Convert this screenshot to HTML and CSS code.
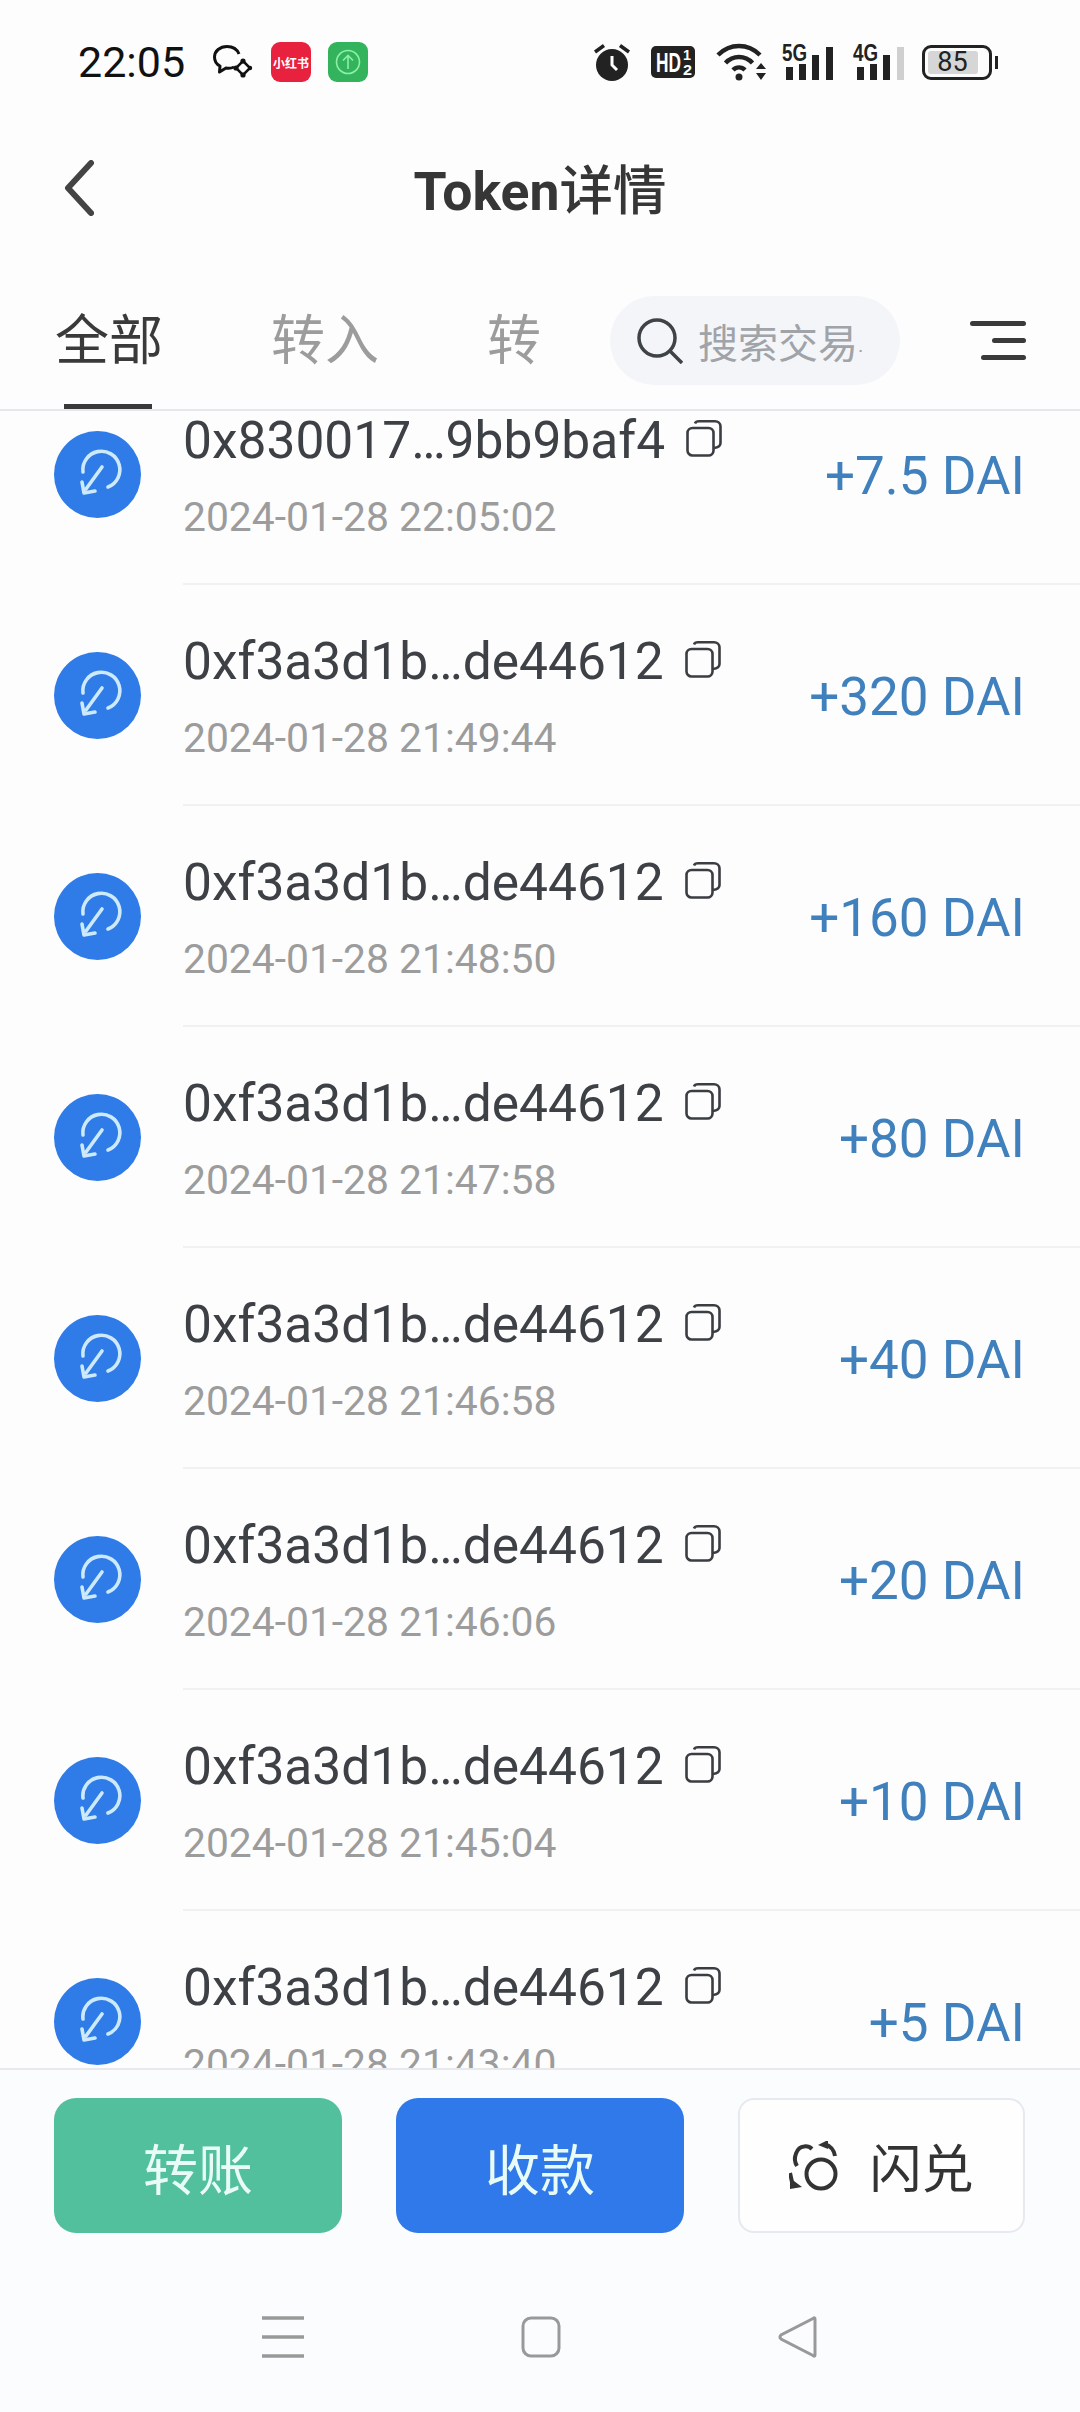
FILE: index.html
```html
<!DOCTYPE html>
<html lang="zh-CN">
<head>
  <meta charset="UTF-8">
  <meta name="viewport" content="width=device-width, initial-scale=1.0">
  <title>Token详情</title>
  <link rel="stylesheet" href="styles.css">
</head>
<body>
  <svg class="sprite" width="0" height="0">
    <symbol id="tx-in" viewBox="14 11 87 87">
      <circle cx="57.5" cy="54.5" r="43.5" fill="#2f7be8"/>
      <g fill="none" stroke="#cdeafc" stroke-width="3.6" stroke-linecap="round" stroke-linejoin="round">
        <path d="M43 52A18.500 18.500 0 1 1 68 67"/>
        <path d="M62 47L46 69"/>
        <path d="M42 62L44 73L55 71"/>
      </g>
    </symbol>
    <symbol id="copy" viewBox="0 0 36 37">
      <g fill="none" stroke="#3a3d42" stroke-width="2.600">
        <rect x="1.500" y="8" width="26" height="27.500" rx="5"/>
        <path d="M9 3.500C9.500 2 11 1.300 13 1.300H29C32 1.300 34.500 3.500 34.500 6.500V23C34.500 26 33 27.500 28 28"/>
      </g>
    </symbol>
  </svg>

  <div class="page">
    <div class="status-bar">
      <div class="status-left">
        <span class="clock">22:05</span>
        <svg class="ic-chat" width="40" height="34" viewBox="0 0 40 34">
          <path d="M26 9C24 4 19 1.500 14 1.500C7 1.500 1.500 6 1.500 12C1.500 16 4 19.500 7 21L6.500 27L13 23C15 23.500 18 23.500 21 22" fill="none" stroke="#111" stroke-width="3" stroke-linejoin="round"/>
          <path d="M30 16L37 23L30 30L23 23Z" fill="none" stroke="#111" stroke-width="2.500"/>
          <circle cx="30" cy="16" r="2.600" fill="#111"/>
          <circle cx="23" cy="23" r="2.600" fill="#111"/>
          <circle cx="30" cy="30" r="2.600" fill="#111"/>
          <circle cx="37" cy="23" r="2.200" fill="#111"/>
        </svg>
        <span class="app-badge app-red">小红书</span>
        <span class="app-badge app-green">
          <svg width="26" height="26" viewBox="0 0 26 26">
            <g fill="none" stroke="#8df0a8" stroke-width="1.600">
              <circle cx="13" cy="13" r="11.500"/>
              <path d="M13 20V6.500M8 11.500L13 6.500L18 11.500"/>
            </g>
          </svg>
        </span>
      </div>
      <div class="status-right">
        <svg class="ic-alarm" width="38" height="38" viewBox="0 0 38 38">
          <circle cx="19" cy="22" r="16" fill="#222"/>
          <path d="M19 13V22L24 27" fill="none" stroke="#fff" stroke-width="3"/>
          <path d="M2 9L11 2.500M36 9L27 2.500" stroke="#222" stroke-width="3.500"/>
        </svg>
        <svg class="ic-hd" width="44" height="32" viewBox="0 0 44 32">
          <rect width="44" height="32" rx="5" fill="#222"/>
          <text x="5" y="26" class="hd-text" textLength="25" lengthAdjust="spacingAndGlyphs">HD</text>
          <text x="32" y="14" class="hd-frac" textLength="8" lengthAdjust="spacingAndGlyphs">1</text>
          <text x="32" y="29" class="hd-frac" textLength="9" lengthAdjust="spacingAndGlyphs">2</text>
        </svg>
        <svg class="ic-wifi" width="51" height="38" viewBox="0 0 51 38">
          <g fill="none" stroke="#222" stroke-width="4.500">
            <path d="M2 12C14 0 32 0 44 12"/>
            <path d="M9.500 20C17 12 29 12 36.500 20"/>
            <path d="M17 27C20.500 23.500 25.500 23.500 29 27"/>
          </g>
          <circle cx="23" cy="34" r="3.500" fill="#222"/>
          <path d="M40 26L45 20L50 26ZM40 30L45 37L50 30Z" fill="#222"/>
        </svg>
        <svg class="ic-signal" width="52" height="37" viewBox="0 0 52 37">
          <text x="0" y="17" class="net-text" textLength="25" lengthAdjust="spacingAndGlyphs">5G</text>
          <rect x="4" y="23" width="7" height="13" fill="#222"/>
          <rect x="17" y="20" width="7" height="16" fill="#222"/>
          <rect x="30" y="11" width="7" height="25" fill="#222"/>
          <rect x="44" y="3" width="7" height="33" fill="#222"/>
        </svg>
        <svg class="ic-signal" width="52" height="37" viewBox="0 0 52 37">
          <text x="0" y="17" class="net-text" textLength="25" lengthAdjust="spacingAndGlyphs">4G</text>
          <rect x="4" y="23" width="7" height="13" fill="#222"/>
          <rect x="17" y="20" width="7" height="16" fill="#222"/>
          <rect x="30" y="11" width="7" height="25" fill="#222"/>
          <rect x="44" y="3" width="7" height="33" fill="#cfcfcf"/>
        </svg>
        <div class="battery">
          <span class="battery-level"></span>
          <span class="battery-num">85</span>
          <span class="battery-nub"></span>
        </div>
      </div>
    </div>

    <div class="title-bar">
      <svg class="back" width="30" height="56" viewBox="0 0 30 56">
        <path d="M27 3L4 28L27 53" fill="none" stroke="#444" stroke-width="6" stroke-linecap="round" stroke-linejoin="round"/>
      </svg>
      <h1 class="title">Token<span class="title-cjk">详情</span></h1>
    </div>

    <div class="tabs">
      <span class="tab active">全部</span>
      <span class="tab">转入</span>
      <span class="tab">转</span>
      <div class="search">
        <svg width="46" height="46" viewBox="0 0 46 46">
          <circle cx="20" cy="20" r="18" fill="none" stroke="#3f4246" stroke-width="3.500"/>
          <path d="M33 33L45 45" stroke="#3f4246" stroke-width="3.500"/>
        </svg>
        <span class="search-text">搜索交易<i class="search-dot">·</i></span>
      </div>
      <div class="filter">
        <span class="filter-line l1"></span>
        <span class="filter-line l2"></span>
        <span class="filter-line l3"></span>
      </div>
    </div>

    <div class="list">
      <div class="rows">
        <div class="row">
          <svg class="avatar"><use href="#tx-in"/></svg>
          <div class="row-body">
            <div class="row-info">
              <div class="addr">0x830017…9bb9baf4<svg class="copy"><use href="#copy"/></svg></div>
              <div class="time">2024-01-28 22:05:02</div>
            </div>
            <div class="amount">+7.5 DAI</div>
          </div>
        </div>
        <div class="row">
          <svg class="avatar"><use href="#tx-in"/></svg>
          <div class="row-body">
            <div class="row-info">
              <div class="addr">0xf3a3d1b…de44612<svg class="copy"><use href="#copy"/></svg></div>
              <div class="time">2024-01-28 21:49:44</div>
            </div>
            <div class="amount">+320 DAI</div>
          </div>
        </div>
        <div class="row">
          <svg class="avatar"><use href="#tx-in"/></svg>
          <div class="row-body">
            <div class="row-info">
              <div class="addr">0xf3a3d1b…de44612<svg class="copy"><use href="#copy"/></svg></div>
              <div class="time">2024-01-28 21:48:50</div>
            </div>
            <div class="amount">+160 DAI</div>
          </div>
        </div>
        <div class="row">
          <svg class="avatar"><use href="#tx-in"/></svg>
          <div class="row-body">
            <div class="row-info">
              <div class="addr">0xf3a3d1b…de44612<svg class="copy"><use href="#copy"/></svg></div>
              <div class="time">2024-01-28 21:47:58</div>
            </div>
            <div class="amount">+80 DAI</div>
          </div>
        </div>
        <div class="row">
          <svg class="avatar"><use href="#tx-in"/></svg>
          <div class="row-body">
            <div class="row-info">
              <div class="addr">0xf3a3d1b…de44612<svg class="copy"><use href="#copy"/></svg></div>
              <div class="time">2024-01-28 21:46:58</div>
            </div>
            <div class="amount">+40 DAI</div>
          </div>
        </div>
        <div class="row">
          <svg class="avatar"><use href="#tx-in"/></svg>
          <div class="row-body">
            <div class="row-info">
              <div class="addr">0xf3a3d1b…de44612<svg class="copy"><use href="#copy"/></svg></div>
              <div class="time">2024-01-28 21:46:06</div>
            </div>
            <div class="amount">+20 DAI</div>
          </div>
        </div>
        <div class="row">
          <svg class="avatar"><use href="#tx-in"/></svg>
          <div class="row-body">
            <div class="row-info">
              <div class="addr">0xf3a3d1b…de44612<svg class="copy"><use href="#copy"/></svg></div>
              <div class="time">2024-01-28 21:45:04</div>
            </div>
            <div class="amount">+10 DAI</div>
          </div>
        </div>
        <div class="row">
          <svg class="avatar"><use href="#tx-in"/></svg>
          <div class="row-body">
            <div class="row-info">
              <div class="addr">0xf3a3d1b…de44612<svg class="copy"><use href="#copy"/></svg></div>
              <div class="time">2024-01-28 21:43:40</div>
            </div>
            <div class="amount">+5 DAI</div>
          </div>
        </div>
      </div>
    </div>

    <div class="footer">
      <div class="actions">
        <div class="btn btn-green">转账</div>
        <div class="btn btn-blue">收款</div>
        <div class="btn btn-white">
          <svg width="50" height="50" viewBox="14 10 50 50">
            <circle cx="46" cy="43" r="14.500" fill="none" stroke="#333" stroke-width="4"/>
            <g fill="none" stroke="#333" stroke-width="4">
              <path d="M22 35C17 27 22 16 29 15.500C32 15 35 16 37 18"/>
              <path d="M50 13.500C55 14.500 59 19 60 25"/>
              <path d="M15 42L17 51"/>
            </g>
            <path d="M43 14L53 9V18ZM15 47L27 56L15 58Z" fill="#333"/>
          </svg>
          <span>闪兑</span>
        </div>
      </div>
      <div class="nav">
        <svg width="42" height="42" viewBox="0 0 42 42">
          <path d="M0 2H42M0 21H42M0 40H42" stroke="#999" stroke-width="3.500"/>
        </svg>
        <svg width="40" height="42" viewBox="0 0 40 42">
          <rect x="2" y="2" width="36" height="38" rx="8" fill="none" stroke="#999" stroke-width="3"/>
        </svg>
        <svg width="40" height="42" viewBox="0 0 40 42">
          <path d="M37 3V39Q37 41 35 39.500L3 23Q1 21 3 19L35 2.500Q37 1 37 3Z" fill="none" stroke="#999" stroke-width="3"/>
        </svg>
      </div>
    </div>
  </div>
</body>
</html>
```

FILE: styles.css
```css
* {
  box-sizing: border-box;
}
body {
  margin: 0;
  background: #fdfdfe;
  color: #333;
  font-family: Roboto, "Noto Sans CJK SC", sans-serif;
}
.sprite {
  position: absolute;
}
.page {
  width: 1080px;
  height: 2412px;
  display: flex;
  flex-direction: column;
  overflow: hidden;
}

/* status bar */
.status-bar {
  height: 124px;
  flex-shrink: 0;
  padding: 0 88px 0 78px;
  display: flex;
  align-items: center;
  justify-content: space-between;
}
.status-bar svg {
  overflow: visible;
}
.status-left {
  display: flex;
  align-items: center;
}
.clock {
  font-size: 43px;
  color: #111;
  margin-right: 28px;
  line-height: 48px;
}
.ic-chat {
  margin-right: 18px;
}
.app-badge {
  width: 40px;
  height: 40px;
  border-radius: 9px;
  display: flex;
  align-items: center;
  justify-content: center;
  margin-right: 17px;
}
.app-red {
  background: #e8213f;
  color: #fff;
  font-size: 12px;
  font-weight: 700;
  white-space: nowrap;
}
.app-green {
  background: #33b45c;
}
.status-right {
  display: flex;
  align-items: center;
}
.ic-alarm {
  margin-right: 20px;
}
.ic-hd {
  margin-right: 21px;
}
.ic-wifi {
  margin-right: 15px;
}
.ic-signal {
  margin-right: 19px;
}
.ic-signal + .battery {
  margin-left: -2px;
}
.hd-text {
  font-family: "Liberation Sans", sans-serif;
  font-size: 27px;
  font-weight: 700;
  fill: #fff;
}
.hd-frac {
  font-family: "Liberation Sans", sans-serif;
  font-size: 15px;
  font-weight: 700;
  fill: #fff;
}
.net-text {
  font-family: "Liberation Sans", sans-serif;
  font-size: 23px;
  font-weight: 700;
  fill: #222;
}
.battery {
  position: relative;
  width: 70px;
  height: 35px;
  padding-right: 9px;
  border: 3px solid #222;
  border-radius: 9px;
  display: flex;
  align-items: center;
  justify-content: center;
}
.battery-level {
  position: absolute;
  left: 3px;
  top: 3px;
  bottom: 3px;
  width: 50px;
  background: #d6d6d6;
  border-radius: 3px;
}
.battery-num {
  position: relative;
  font-size: 27px;
  color: #222;
}
.battery-nub {
  position: absolute;
  right: -9px;
  top: 8px;
  width: 3px;
  height: 13px;
  background: #222;
}

/* title */
.title-bar {
  height: 128px;
  flex-shrink: 0;
  padding-bottom: 4px;
  position: relative;
  display: flex;
  align-items: center;
  justify-content: center;
}
.back {
  position: absolute;
  left: 64px;
  top: 36px;
}
.title {
  margin: 0;
  font-size: 53.500px;
  font-weight: 700;
  color: #363636;
}
.title-cjk {
  font-weight: 500;
}

/* tabs */
.tabs {
  height: 159px;
  flex-shrink: 0;
  padding: 23px 54px 0 55px;
  border-bottom: 2px solid #e6e7ea;
  display: flex;
  align-items: center;
}
.tab {
  position: relative;
  font-size: 54px;
  line-height: 60px;
  color: #9c9c9c;
  margin-right: 108px;
  white-space: nowrap;
}
.tab:nth-child(3) {
  margin-right: 0;
}
.tab.active {
  color: #3a3a3a;
}
.tab.active::after {
  content: "";
  position: absolute;
  left: 9px;
  right: 11px;
  bottom: -37px;
  height: 5px;
  background: #3a3a3a;
}
.search {
  width: 290px;
  height: 89px;
  margin: -3px 0 0 auto;
  padding-left: 27px;
  border-radius: 45px;
  background: #f3f5f9;
  display: flex;
  align-items: center;
  gap: 15px;
  overflow: hidden;
  flex-shrink: 0;
}
.search-text {
  font-size: 40px;
  color: #a0a3a8;
  white-space: nowrap;
}
.search-dot {
  font-style: normal;
  font-size: 20px;
}
.filter {
  width: 56px;
  margin: -3px 0 0 70px;
  display: flex;
  flex-direction: column;
  align-items: flex-end;
  gap: 12px;
  flex-shrink: 0;
}
.filter-line {
  height: 5px;
  border-radius: 3px;
  background: #3a3a3a;
}
.l1 {
  width: 56px;
}
.l2 {
  width: 34px;
}
.l3 {
  width: 45px;
}

/* list */
.list {
  height: 1657px;
  flex-shrink: 0;
  overflow: hidden;
  background: #fdfdfe;
}
.rows {
  margin-top: -47px;
}
.row {
  height: 221px;
  padding-left: 54px;
  display: flex;
}
.avatar {
  width: 87px;
  height: 87px;
  align-self: center;
  flex-shrink: 0;
}
.row-body {
  flex: 1;
  margin-left: 42px;
  padding: 6px 55px 0 0;
  border-bottom: 2px solid #f0f1f3;
  display: flex;
  align-items: center;
  justify-content: space-between;
}
.addr {
  font-size: 51.500px;
  line-height: 60px;
  color: #3d4045;
  display: flex;
  align-items: center;
}
.copy {
  width: 36px;
  height: 37px;
  margin: -6px 0 0 21px;
}
.time {
  margin-top: 21px;
  font-size: 40.800px;
  line-height: 50px;
  color: #9c9c9c;
}
.amount {
  margin-top: -2px;
  font-size: 53px;
  color: #3f80bd;
  white-space: nowrap;
}

/* footer */
.footer {
  flex: 1;
  padding-top: 28px;
  border-top: 2px solid #e8e9ec;
  background: #fbfcfe;
}
.actions {
  padding: 0 55px 0 54px;
  display: flex;
  justify-content: space-between;
}
.btn {
  width: 288px;
  height: 135px;
  border-radius: 22px;
  font-size: 55px;
  color: #e9fbf6;
  display: flex;
  align-items: center;
  justify-content: center;
}
.btn-green {
  background: #52c09c;
}
.btn-blue {
  background: #2f79ea;
}
.btn-white {
  width: 287px;
  border: 2px solid #e6e9f0;
  border-radius: 16px;
  background: #fefefe;
  color: #333;
  font-size: 52px;
  gap: 30px;
}
.nav {
  margin-top: 83px;
  padding: 0 262px;
  display: flex;
  justify-content: space-between;
}
```
